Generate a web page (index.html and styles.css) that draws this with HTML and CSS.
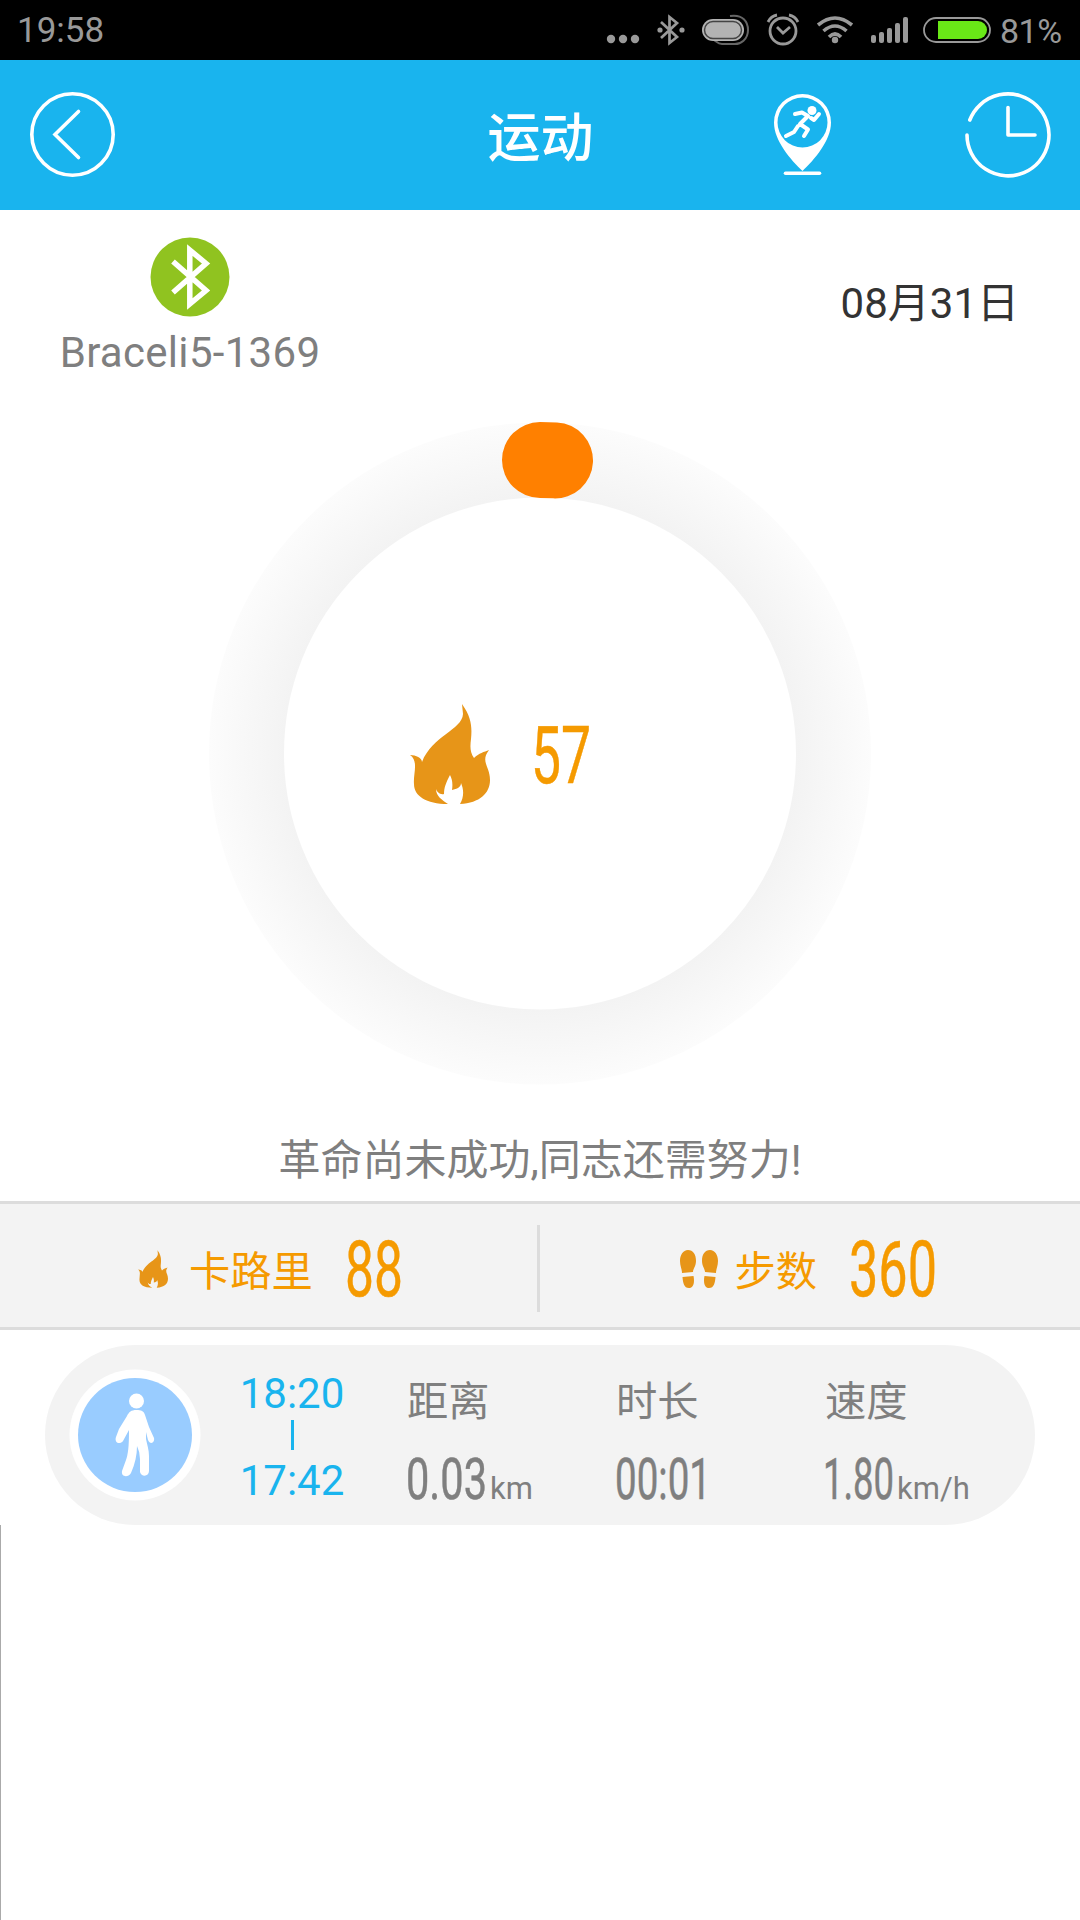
FILE: index.html
```html
<!DOCTYPE html>
<html lang="zh-CN">
<head>
<meta charset="utf-8">
<title>运动</title>
<link rel="stylesheet" href="styles.css">
</head>
<body>
<svg class="defs" aria-hidden="true">
  <symbol id="flame" viewBox="0 0 80 100">
    <path d="M52 0C62 14 62 24 61 35C60 43 60 48 64 54C69 49 74 48 79 46C70 58 80 62 80 76C80 89 70 99 50 100C54 93 54 86 51 79C51 83 47 85 42 86C43 79 42 75 40 71C36 79 34 83 34 90C30 91 27 88 26 85C26 92 32 96 38 100C16 100 4 92 4 80C3 70 9 57 0 51C6 51 12 54 12 58C22 32 52 26 53 10Z"/>
  </symbol>
</svg>
<header class="status">
  <span class="status-time">19:58</span>
  <svg class="status-icons" width="420" height="60" viewBox="600 0 420 60">
    <g fill="#999"><circle cx="611" cy="39" r="4.2"/><circle cx="623" cy="39" r="4.2"/><circle cx="635" cy="39" r="4.2"/><circle cx="660" cy="30" r="2.6"/><circle cx="682" cy="30" r="2.6"/></g>
    <path d="M661 22L677 37L669.500 43V17L677 23L661 38" fill="none" stroke="#999" stroke-width="2.7"/>
    <g fill="none" stroke="#666" stroke-width="2"><path d="M730 16C743 14 748 22 748 30C748 39 741 45 733 44H722C718 44 717 42 714 40"/></g>
    <rect x="702" y="19" width="42" height="22" rx="11" fill="#b3b3b3"/><rect x="704.500" y="21.500" width="37" height="17" rx="8.500" fill="none" stroke="#444" stroke-width="1.500"/>
    <g fill="none" stroke="#999" stroke-width="2.800"><circle cx="783" cy="31" r="13"/><path d="M777 27L783 33L790 27M768 22Q771 16 777 15M789 15Q795 16 798 22"/>
    <path stroke-width="3.600" d="M818 25Q835 11 852 25M823.500 31Q835 21 846.500 31M829 37Q835 31 841 37"/></g>
    <circle cx="835" cy="40" r="3.200" fill="#999"/>
    <g fill="#999"><rect x="871" y="35" width="5" height="8" rx="2"/><rect x="879" y="32" width="5" height="11" rx="2"/><rect x="887" y="28" width="5" height="15" rx="2"/><rect x="895" y="23" width="5" height="20" rx="2"/><rect x="903" y="17" width="5" height="26" rx="2"/></g>
    <rect x="924" y="18" width="66" height="24" rx="12" fill="none" stroke="#999" stroke-width="1.800"/><path d="M938 21H978A9 9 0 0 1 978 39H938Z" fill="#69e817"/>
  </svg>
  <span class="status-battery">81%</span>
</header>
<nav class="bar">
  <svg class="icon-back" width="85" height="85" viewBox="0 0 85 85"><circle cx="42.500" cy="42.500" r="40.700"/><path d="M48.500 19.500L25 42.500L48.500 65.500"/></svg>
  <h1 class="title">运动</h1>
  <div class="actions">
    <svg width="57" height="82" viewBox="0 0 57 82"><path fill="#fff" fill-rule="evenodd" d="M28.500 0A28.500 28.500 0 0 0 0 28.500C0 47 17 66 28.500 77C40 66 57 47 57 28.500A28.500 28.500 0 0 0 28.500 0ZM28.500 3.500A25 25 0 1 1 28.500 53.500A25 25 0 0 1 28.500 3.500Z"/><path class="line" d="M11.500 79.300H45.500"/><circle cx="38" cy="16.500" r="4.500" fill="#fff"/><path class="runner" d="M21 20L28 18.500L34 22L26 30L34 35.500L30 42M12 42L20 38L24 32M37 24L40 26L45 20"/></svg>
    <svg width="86" height="86" viewBox="0 0 86 86"><path class="line" d="M2 43A41 41 0 1 0 4.800 28M43 15.500V43H70"/></svg>
  </div>
</nav>
<section class="info">
  <div class="device">
    <svg width="80" height="80" viewBox="0 0 80 80"><circle cx="40" cy="40" r="39.500" fill="#90c320"/><path d="M23 24.500L56 53.500L39.800 67V13L56 26.500L23 55.500" fill="none" stroke="#fff" stroke-width="5.500"/></svg>
    <span class="device-name">Braceli5-1369</span>
  </div>
  <time class="date">08月31日</time>
</section>
<section class="goal">
  <svg width="664" height="664" viewBox="0 0 664 664">
    <defs><radialGradient id="track" gradientUnits="userSpaceOnUse" cx="332" cy="332.500" r="331"><stop offset=".773" stop-color="#f3f3f3"/><stop offset="1" stop-color="#fcfcfc"/></radialGradient></defs>
    <circle cx="332" cy="332.500" r="293.500" fill="none" stroke="url(#track)" stroke-width="75"/>
    <path d="M332 39A293.500 293.500 0 0 1 347 39.400" fill="none" stroke="#ff8000" stroke-width="76" stroke-linecap="round"/>
    <use href="#flame" x="202" y="283" width="80" height="100" fill="#e79518"/>
    <text class="digits" x="323" y="362" font-size="80.500" textLength="60" lengthAdjust="spacingAndGlyphs">57</text>
  </svg>
  <p class="message">革命尚未成功,同志还需努力!</p>
</section>
<section class="stats">
  <div class="stat stat-calories">
    <svg width="30" height="38"><use href="#flame" width="30" height="38" fill="#e79518"/></svg>
    <span class="label">卡路里</span>
    <svg class="num" width="54" height="55"><text class="digits" x="-2" y="55" font-size="77" textLength="58" lengthAdjust="spacingAndGlyphs">88</text></svg>
  </div>
  <div class="stat stat-steps">
    <svg width="38" height="38" viewBox="0 0 38 38" fill="#e79518"><path id="sole" d="M8 0C3 0 0 5 0 11C0 16 2 19 2 23L13 22C13 19 16 16 16 11C16 4 13 0 8 0ZM2.500 27L13.500 26C15 33 13 38 9 38C4 38 3 33 2.500 27Z"/><use href="#sole" transform="translate(38 0) scale(-1 1)"/></svg>
    <span class="label">步数</span>
    <svg class="num" width="84" height="55"><text class="digits" x="-2" y="55" font-size="77" textLength="88" lengthAdjust="spacingAndGlyphs">360</text></svg>
  </div>
</section>
<main class="records">
  <article class="record">
    <svg class="avatar" width="132" height="132" viewBox="0 0 132 132"><circle cx="66" cy="66" r="65.500" fill="#fff"/><circle cx="66" cy="66" r="57" fill="#9cf"/><circle cx="67.500" cy="32" r="7.500" fill="#fff"/><path fill="#fff" d="M67.500 41C62 41 60 43 58 47L50 60L47 68C45 74 51 76 54 72L60 61C60 78 59 85 57 91L53 102C52 108 59 109 62 104C66 95 68 86 68 77Q71 83 71 90V103C72 108 80 108 80 102V87C80 81 78 75 77 70V63L79 71C81 76 86 74 85 69L80 58L76 46C75 42 72 41 67.500 41Z"/></svg>
    <div class="period"><span>18:20</span><i></i><span>17:42</span></div>
    <dl class="metric"><dt>距离</dt><dd><svg class="num" width="78" height="41"><text class="digits" x="-1" y="41" font-size="57.500" textLength="81" lengthAdjust="spacingAndGlyphs">0.03</text></svg><span class="unit">km</span></dd></dl>
    <dl class="metric"><dt>时长</dt><dd><svg class="num" width="90" height="41"><text class="digits" x="-1" y="41" font-size="57.500" textLength="96" lengthAdjust="spacingAndGlyphs">00:01</text></svg></dd></dl>
    <dl class="metric"><dt>速度</dt><dd><svg class="num" width="67" height="41"><text class="digits" x="-2" y="41" font-size="57.500" textLength="71" lengthAdjust="spacingAndGlyphs">1.80</text></svg><span class="unit">km/h</span></dd></dl>
  </article>
</main>
</body>
</html>
```
FILE: styles.css
```css
* { box-sizing: border-box; margin: 0; padding: 0; }
body {
  width: 1080px;
  height: 1920px;
  display: flex;
  flex-direction: column;
  background: #fff;
  color: #7f7f7f;
  font: 42px/50px Roboto, "Noto Sans CJK SC", sans-serif;
  overflow: hidden;
}
svg { display: block; flex: none; }
.defs { width: 0; height: 0; position: absolute; }

.status {
  height: 60px;
  display: flex;
  align-items: center;
  background: #000;
  color: #999;
  font: 35px/60px Roboto, sans-serif;
}
.status span { padding-top: 2px; }
.status-time { width: 600px; padding-left: 17px; }
.status-icons { margin-right: -20px; }
.status-battery { font-size: 34px; letter-spacing: -.5px; }

.bar {
  height: 150px;
  display: grid;
  grid-template-columns: 1fr auto 1fr;
  align-items: center;
  padding: 0 29px 1px 30px;
  background: #19b4ee;
}
.icon-back { fill: none; stroke: #fff; stroke-width: 3.6; stroke-linecap: round; }
.title { padding-top: 9px; color: #fff; font-size: 53px; font-weight: 500; line-height: 70px; }
.actions { display: flex; justify-content: flex-end; align-items: center; gap: 134px; }
.line { fill: none; stroke: #fff; stroke-width: 3.6; stroke-linecap: round; stroke-linejoin: round; }
.runner { fill: none; stroke: #fff; stroke-width: 4; stroke-linecap: round; stroke-linejoin: round; }

.info {
  height: 211px;
  display: flex;
  justify-content: space-between;
  padding: 27px 61px 0 58px;
}
.device { width: 264px; display: flex; flex-direction: column; align-items: center; gap: 11px; }
.device-name { letter-spacing: .3px; white-space: nowrap; }
.date { margin-top: 42px; color: #333; }

.goal { height: 780px; display: flex; flex-direction: column; align-items: center; }
.message { margin-top: 51px; white-space: nowrap; }
.digits { fill: #f59a00; stroke: #f59a00; stroke-width: .5; font-family: Roboto, sans-serif; }

.stats {
  height: 129px;
  display: flex;
  padding-top: 6px;
  background: #f3f3f3;
  border-top: 3px solid #dcdcdc;
  border-bottom: 3px solid #dcdcdc;
  color: #f59a00;
}
.stat { flex: 1; display: flex; align-items: center; }
.stat-calories { padding-left: 138px; }
.stat-calories::after { content: ""; width: 3px; height: 87px; margin: 0 -1px 0 auto; background: #dcdcdc; }
.stat-steps { padding-left: 141px; }
.label { margin: 0 34px 0 21px; padding-top: 6px; font-size: 41.300px; }
.stat-steps .label { margin: 0 34px 0 17px; }
.num { overflow: visible; }

.records { flex: 1; padding-top: 15px; background: linear-gradient(#aaa, #aaa) 0 195px / 1px 100% no-repeat; }
.record {
  width: 990px;
  height: 180px;
  margin: 0 auto;
  display: flex;
  border-radius: 90px;
  background: #f3f3f3;
}
.avatar { margin: 24px 0 0 24px; }
.period {
  width: 110px;
  margin: 24px 0 0 36px;
  display: flex;
  flex-direction: column;
  align-items: center;
  color: #19b4ee;
}
.period i { width: 3px; height: 30px; margin: 1px 0 6px; background: currentColor; }
.metric { width: 209px; padding-top: 32px; }
.metric:nth-of-type(1) { margin-left: 60px; }
.metric dt { font-size: 41.300px; }
.metric dd { padding-top: 31px; display: flex; }
.metric .digits { fill: #7f7f7f; stroke: #7f7f7f; }
.unit { margin: 11px 0 0 5px; font-size: 31px; line-height: 40px; }
```
